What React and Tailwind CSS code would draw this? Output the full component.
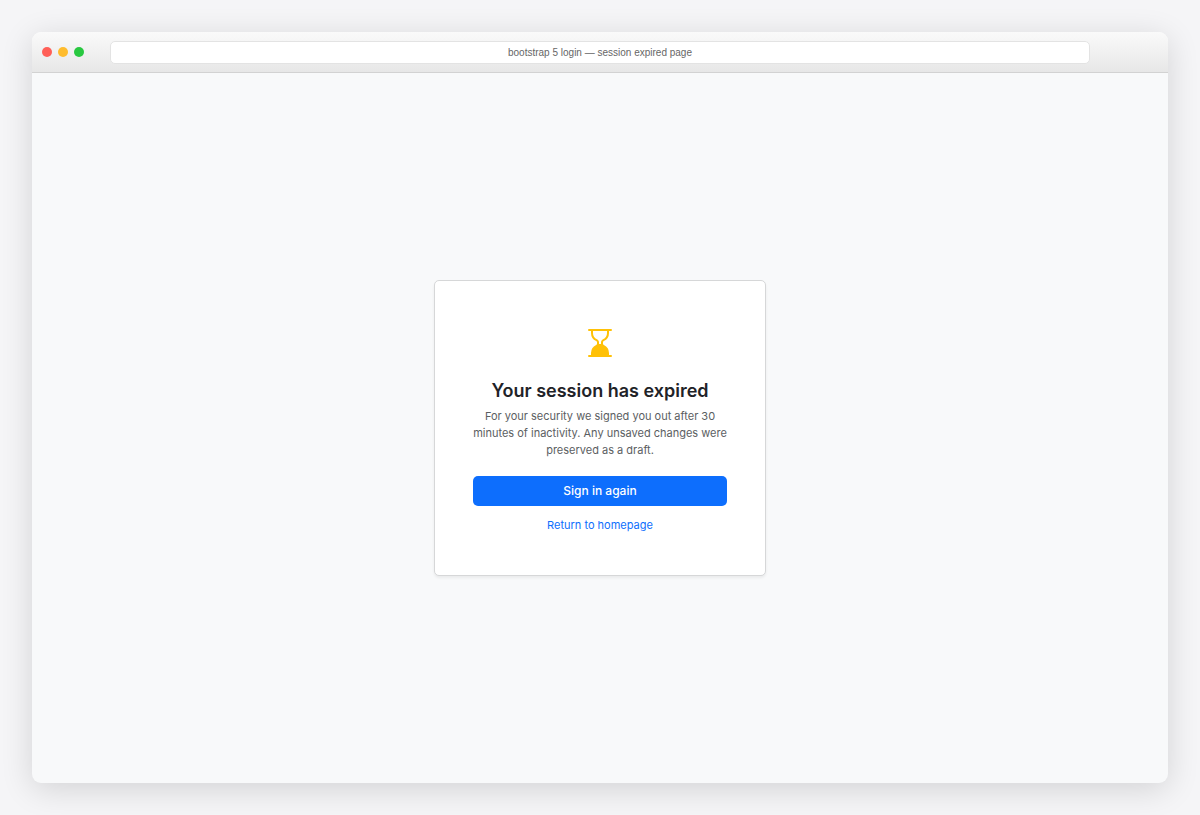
import { BsHourglassBottom } from 'react-icons/bs';

function TitleBar({ title }) {
    return (
        <header className="flex h-[41px] items-center gap-[26px] border-b border-[#d2d2d2] bg-linear-to-b from-[#fafafa] to-[#e7e7e7] pr-[78px] pl-[10px]">
            <div className="flex gap-[6px]">
                <span className="size-[10px] rounded-full bg-[#ff5f57]" />
                <span className="size-[10px] rounded-full bg-[#febc2e]" />
                <span className="size-[10px] rounded-full bg-[#28c840]" />
            </div>
            <div className="flex h-[23px] flex-1 items-center justify-center rounded-[5px] border border-[#e3e3e3] bg-white font-['Liberation_Sans',sans-serif] text-[10px] text-[#666666]">
                {title}
            </div>
        </header>
    );
}

function SessionExpiredCard() {
    return (
        <section className="w-[332px] rounded-[5px] border border-[#d6d7d8] bg-white px-[38px] pt-[46px] pb-[41px] text-center shadow-[0_2px_3px_rgba(0,0,0,0.06)]">
            <BsHourglassBottom className="mx-auto text-[#ffc107]" size={32} />
            <h1 className="mt-5 text-[18px] leading-[24px] font-semibold text-[#1f2328]">Your session has expired</h1>
            <p className="mt-[5px] text-[11px] leading-[17px] text-[#5b5e62]">
                For your security we signed you out after 30 minutes of inactivity. Any unsaved changes were preserved as a draft.
            </p>
            <button type="button" className="mt-[17px] block h-[30px] w-full rounded-[5px] bg-[#0d6efd] text-[12px] font-medium text-white">
                Sign in again
            </button>
            <a href="#" className="mt-[11px] block text-[11px] leading-[17px] text-[#0d6efd]">
                Return to homepage
            </a>
        </section>
    );
}

export default function App() {
    return (
        <div className="flex min-h-screen bg-[#f5f5f7] p-8 font-['Inter',sans-serif]">
            <div className="flex flex-1 flex-col overflow-hidden rounded-[9px] bg-[#f8f9fa] shadow-[0_6px_32px_rgba(0,0,0,0.14)]">
                <TitleBar title="bootstrap 5 login — session expired page" />
                <main className="flex flex-1 items-center justify-center">
                    <SessionExpiredCard />
                </main>
            </div>
        </div>
    );
}
